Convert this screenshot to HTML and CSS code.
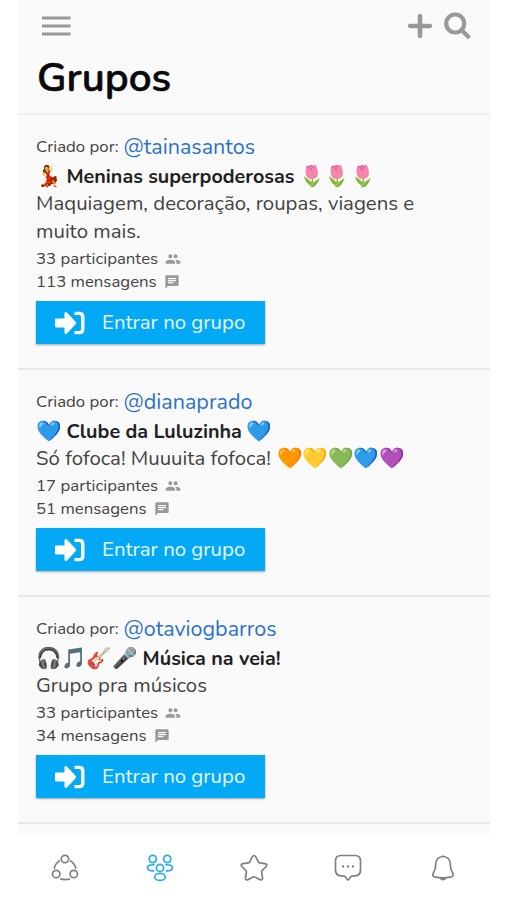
FILE: index.html
```html
<!DOCTYPE html>
<html lang="pt-BR">
<head>
<meta charset="utf-8">
<title>Grupos</title>
<link rel="stylesheet" href="styles.css">
</head>
<body>
<svg class="defs" width="0" height="0" aria-hidden="true">
  <symbol id="people" viewBox="0 0 24 24"><path d="M16 11c1.660 0 3-1.340 3-3s-1.340-3-3-3-3 1.340-3 3 1.340 3 3 3zM8 11c1.660 0 3-1.340 3-3S9.660 5 8 5 5 6.340 5 8s1.340 3 3 3zm0 2c-2.330 0-7 1.170-7 3.500V19h14v-2.500C15 14.170 10.330 13 8 13zm8 0c-.29 0-.62.020-.97.050C16.190 13.890 17 15.020 17 16.500V19h6v-2.500c0-2.330-4.670-3.500-7-3.500z"/></symbol>
  <symbol id="chat" viewBox="0 0 24 24"><path d="M20 2H4c-1.100 0-2 .9-2 2v18l4-4h14c1.100 0 2-.9 2-2V4c0-1.100-.9-2-2-2zM6 9h12v2H6V9zm8 5H6v-2h8v2zm4-6H6V6h12v2z"/></symbol>
  <symbol id="enter" viewBox="0 0 30 24"><path d="M1.200 7.600H9.500V2.400c0-1.400 1.400-1.900 2.400-.9l8.900 9.400c.6.600.6 1.500 0 2.100l-8.900 9.500c-1 1-2.400.5-2.400-.9v-5.200H1.200c-.7 0-1.200-.5-1.200-1.200V8.800c0-.7.500-1.200 1.200-1.200z"/><path class="bracket" d="M19.500 2.400h4.700q3.600 0 3.600 3.600v12q0 3.600-3.600 3.600h-4.700"/></symbol>
</svg>
<div class="app">
  <header class="header">
    <div class="toolbar">
      <svg class="menu" viewBox="0 0 30 20"><path d="M1 2h28.500M1 10h28.500M1 18h28.500"/></svg>
      <svg class="plus" viewBox="0 0 24 24"><path d="M12 2.200v19.600M2.200 12h19.600"/></svg>
      <svg class="search" viewBox="0 0 28 28"><circle cx="11.200" cy="11.500" r="9"/><path d="M17.500 18l8 8"/></svg>
    </div>
    <h1>Grupos</h1>
  </header>
  <main class="list">
    <article class="group">
      <p class="author"><span class="by">Criado por:</span><a class="user">@tainasantos</a></p>
      <h2><span class="emoji">💃</span><span class="name">Meninas superpoderosas</span><span class="emoji">🌷</span><span class="emoji">🌷</span><span class="emoji">🌷</span></h2>
      <p class="desc"><span>Maquiagem, decoração, roupas, viagens e<br>muito mais.</span></p>
      <p class="stat"><span>33 participantes</span><svg><use href="#people"/></svg></p>
      <p class="stat"><span>113 mensagens</span><svg><use href="#chat"/></svg></p>
      <button class="join"><svg><use href="#enter"/></svg><span>Entrar no grupo</span></button>
    </article>
    <article class="group">
      <p class="author"><span class="by">Criado por:</span><a class="user">@dianaprado</a></p>
      <h2><span class="emoji blue">💙</span><span class="name">Clube da Luluzinha</span><span class="emoji blue">💙</span></h2>
      <p class="desc"><span class="lead">Só fofoca! Muuuita fofoca!</span><span class="emoji">🧡</span><span class="emoji">💛</span><span class="emoji green">💚</span><span class="emoji blue">💙</span><span class="emoji purple">💜</span></p>
      <p class="stat"><span>17 participantes</span><svg><use href="#people"/></svg></p>
      <p class="stat"><span>51 mensagens</span><svg><use href="#chat"/></svg></p>
      <button class="join"><svg><use href="#enter"/></svg><span>Entrar no grupo</span></button>
    </article>
    <article class="group">
      <p class="author"><span class="by">Criado por:</span><a class="user">@otaviogbarros</a></p>
      <h2><span class="emoji">🎧</span><span class="emoji">🎵</span><span class="emoji">🎸</span><span class="emoji">🎤</span><span class="name">Música na veia!</span></h2>
      <p class="desc"><span>Grupo pra músicos</span></p>
      <p class="stat"><span>33 participantes</span><svg><use href="#people"/></svg></p>
      <p class="stat"><span>34 mensagens</span><svg><use href="#chat"/></svg></p>
      <button class="join"><svg><use href="#enter"/></svg><span>Entrar no grupo</span></button>
    </article>
  </main>
  <nav class="tabs">
    <a><svg viewBox="0 0 28 28"><circle cx="14" cy="5" r="3.700"/><circle cx="5.200" cy="20" r="3.700"/><circle cx="22.800" cy="20" r="3.700"/><path d="M9 6.500a11.500 11.500 0 0 0-5.800 8.300M19 6.500a11.500 11.500 0 0 1 5.800 8.300M9 24.800q5 1.700 10 0"/></svg></a>
    <a class="active"><svg viewBox="0 0 28 28"><circle cx="6.800" cy="5" r="3.600"/><circle cx="21.200" cy="5" r="3.600"/><circle cx="14" cy="13.900" r="3.600"/><ellipse cx="14" cy="22.900" rx="5.300" ry="3.500"/><path d="M8.600 10.900c-4.300-.6-7.100.6-7.100 2.900s3 3.500 6.700 2.900M19.400 10.900c4.300-.6 7.100.6 7.100 2.900s-3 3.500-6.700 2.900"/></svg></a>
    <a><svg viewBox="0 0 28 28"><path d="M12.200 2.900q1.800-2.800 3.600 0l2.500 5q.4.800 1.300.9l5.300.8q3 .6 1.200 2.900l-4 4.100q-.6.600-.5 1.500l.9 5.500q.3 3.100-2.600 2l-4.900-2.500q-1-.5-2 0l-4.900 2.500q-2.900 1.100-2.600-2l.9-5.500q.1-.9-.5-1.500l-4-4.100q-1.800-2.300 1.200-2.900l5.300-.8q.9-.1 1.300-.9z"/></svg></a>
    <a><svg viewBox="0 0 28 28"><path d="M7 1.500h14q5.500 0 5.500 5.500v9q0 5.500-5.500 5.900l-3 .3q-1 .1-1.600.9l-1.500 2.200q-.9 1.200-1.800 0l-1.500-2.200q-.6-.8-1.600-.9l-3-.3q-5.500-.4-5.500-5.900V7q0-5.500 5.500-5.500z"/><path class="dots" d="M9 12.500h.01M14 12.500h.01M19 12.500h.01"/></svg></a>
    <a><svg viewBox="0 0 28 28"><path d="M14 2.500c-4.600 0-7.300 3.500-7.300 8 0 4.300-.8 6.200-2.400 8.700-1.400 2.300-.3 3.600 2.300 4 4.800.8 10 .8 14.800 0 2.600-.4 3.700-1.700 2.300-4-1.600-2.500-2.400-4.400-2.400-8.700 0-4.500-2.700-8-7.300-8z"/><path class="solid" d="M11.500 2.800q2.500-2.500 5 0zM10.500 24h7q-1.200 2.500-3.500 2.500T10.500 24z"/></svg></a>
  </nav>
</div>
</body>
</html>
```

FILE: styles.css
```css
* { box-sizing: border-box; }
body { margin: 0; background: #fff; font-family: Nunito, Lato, sans-serif; color: #444; }
.defs { display: block; }
.app { width: 472px; height: 900px; margin-left: 18px; display: flex; flex-direction: column; background: #fafafa; overflow: hidden; }
p, h1, h2 { margin: 0; }
.header { height: 115px; flex: none; border-bottom: 2px solid #f0f0f0; padding: 11px 18px 0 19px; }
.toolbar { display: flex; align-items: center; height: 30px; padding-left: 4px; }
.toolbar svg { fill: none; stroke: #999; }
.menu { width: 30px; height: 20px; stroke-width: 2.800; margin-right: auto; }
.plus { width: 24px; height: 24px; stroke-width: 4.600; stroke-linecap: round; margin-right: 12px; }
.search { width: 28px; height: 28px; stroke-width: 4.200; }
h1 { font-size: 40.500px; line-height: 50px; margin-top: 12px; font-weight: 600; color: #0a0a0a; -webkit-text-stroke: .6px #0a0a0a; }
.list { flex: 1; min-height: 0; overflow: hidden; }
.group { padding: 17px 18px 24px; border-bottom: 2px solid #e8e8e8; }
.group p, h2 { white-space: nowrap; }
.author { display: flex; align-items: center; height: 30px; line-height: 30px; }
.by { font-size: 16.800px; width: 87.500px; }
.user { font-size: 21.500px; color: #2b72c8; }
h2 { display: flex; align-items: center; height: 28px; font-size: 19.750px; line-height: 28px; font-weight: 700; color: #222; }
.name { margin: 0 5px; padding-top: 1px; }
.emoji { font-family: "Noto Color Emoji", sans-serif; font-size: 20.500px; width: 25.400px; flex: none; font-weight: 400; }
.blue { filter: hue-rotate(-3deg) brightness(1.32) saturate(.82); }
.purple { filter: hue-rotate(4deg) brightness(1.08) saturate(.85); }
.green { filter: saturate(.85) brightness(1.05); }
.desc { display: flex; align-items: center; font-size: 20.400px; line-height: 28px; margin: -1px 0 2px; }
.lead { margin-right: 6.500px; }
.stat { display: flex; align-items: center; height: 23px; line-height: 24px; font-size: 16.800px; }
.stat span { padding-top: 1px; }
.stat svg { width: 16px; height: 16px; margin-left: 7px; fill: #999; }
.join { display: flex; align-items: center; width: 228.500px; height: 43px; margin-top: 8px; padding: 0 0 0 19px; border: 0; background: #03a9f4; color: #e8f7ff; font: 400 20.400px/43px Nunito, Lato, sans-serif; box-shadow: 0 1px 2px rgba(0,0,0,.35); white-space: nowrap; }
.join svg { width: 30px; height: 24px; fill: #fff; margin-right: 17px; }
.bracket { fill: none; stroke: #fff; stroke-width: 3.400; }
.tabs { flex: none; display: flex; height: 66px; background: #fff; }
.tabs a { flex: 1; display: flex; align-items: center; justify-content: center; }
.tabs svg { width: 28px; height: 28px; fill: none; stroke: #808080; stroke-width: 1.700; margin-top: 2px; }
.tabs .active svg { stroke: #27aaeb; }
.tabs .dots { stroke-width: 2.400; stroke-linecap: round; }
.tabs .solid { fill: #808080; stroke: none; }
```
